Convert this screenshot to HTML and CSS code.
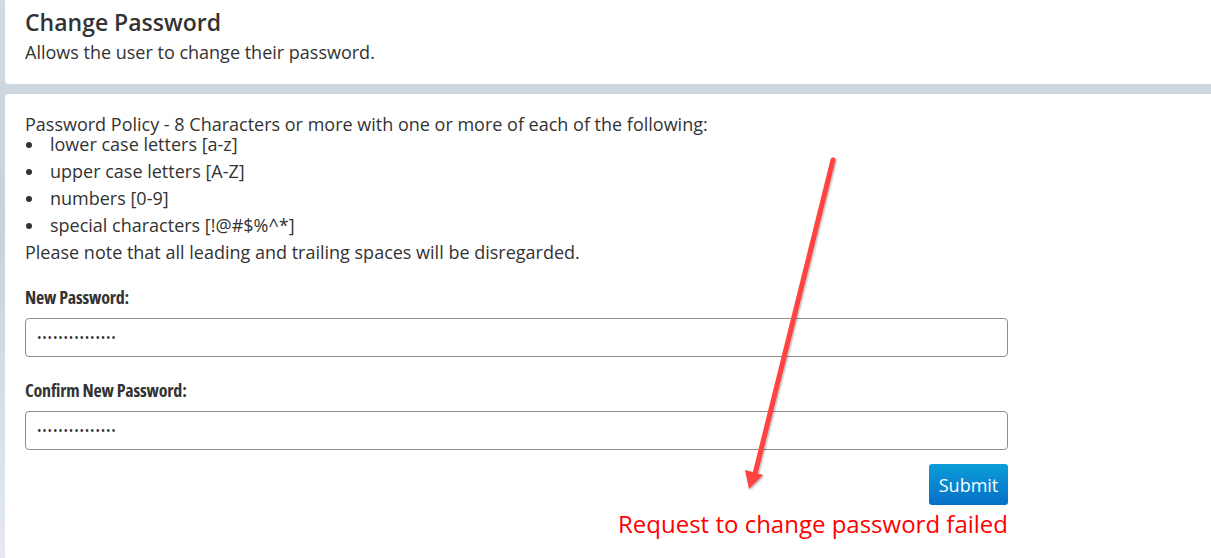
FILE: index.html
```html
<!DOCTYPE html>
<html>
<head>
<meta charset="utf-8">
<link rel="stylesheet" href="styles.css">
</head>
<body>
<div class="page">
  <header class="card head">
    <h1 class="title">Change Password</h1>
    <p class="subtitle">Allows the user to change their password.</p>
  </header>
  <main class="card body">
    <div class="form">
      <p class="policy">Password Policy - 8 Characters or more with one or more of each of the following:</p>
      <ul class="rules">
        <li>lower case letters [a-z]</li>
        <li>upper case letters [A-Z]</li>
        <li>numbers [0-9]</li>
        <li>special characters [!@#$%^*]</li>
      </ul>
      <p class="policy">Please note that all leading and trailing spaces will be disregarded.</p>
      <label class="label first" for="np">New Password:</label>
      <input class="field" id="np" type="password" value="abcdefghijklmno">
      <label class="label" for="cp">Confirm New Password:</label>
      <input class="field" id="cp" type="password" value="abcdefghijklmno">
      <div class="actions">
        <button class="submit" type="button">Submit</button>
        <div class="error">Request to change password failed</div>
      </div>
    </div>
  </main>
</div>
<svg class="arrow" width="1211" height="558" viewBox="0 0 1211 558">
  <defs>
    <filter id="sh" x="-20%" y="-20%" width="140%" height="140%">
      <feDropShadow dx="1" dy="1" stdDeviation="1.2" flood-color="#000" flood-opacity="0.35"/>
    </filter>
  </defs>
  <g filter="url(#sh)">
    <line x1="833" y1="160" x2="755" y2="474" stroke="#ff4242" stroke-width="5" stroke-linecap="round"/>
    <polygon points="745,470 763,475 749,489" fill="#ff4242"/>
  </g>
</svg>
</body>
</html>
```

FILE: styles.css
```css
html, body {
  margin: 0;
  padding: 0;
}
body {
  width: 1211px;
  height: 558px;
  overflow: hidden;
  background: linear-gradient(180deg, #d3dbe2 0%, #c9d1d9 40%, #d6dde3 70%, #e6eaee 100%);
  font-family: "Open Sans", "Noto Sans", sans-serif;
  color: #333;
  position: relative;
}
.page {
  padding-left: 5px;
  display: flex;
  flex-direction: column;
  gap: 10px;
}
.card {
  background: #fff;
  border-radius: 4px 0 0 4px;
}
.head {
  height: 84px;
  box-sizing: border-box;
  padding: 5px 20px 0;
  border-radius: 0 0 0 4px;
}
.title {
  margin: 0;
  font-size: 23px;
  line-height: 34px;
  font-weight: 600;
  color: #333;
}
.subtitle {
  margin: 2px 0 0;
  font-size: 18px;
  line-height: 22px;
}
.body {
  padding: 20px 20px 20px;
}
.form {
  width: 983px;
  display: flex;
  flex-direction: column;
}
.policy {
  margin: 0;
  font-size: 18px;
  line-height: 20px;
}
.rules {
  list-style: none;
  margin: 0;
  padding: 0;
}
.rules li {
  display: flex;
  align-items: center;
  font-size: 18px;
  line-height: 20px;
  margin-bottom: 7px;
}
.rules li::before {
  content: "";
  flex-shrink: 0;
  width: 6px;
  height: 6px;
  border-radius: 50%;
  background: #333;
  margin: 1px 18px 0 1px;
}
.label {
  margin: 23px 0 11px;
  font-weight: 700;
  font-size: 18px;
  line-height: 20px;
  font-stretch: 84%;
  letter-spacing: -0.2px;
  color: #333;
}
.label.first {
  margin-top: 25px;
}
.field {
  height: 39px;
  box-sizing: border-box;
  border: 1px solid #8e8e8e;
  border-radius: 4px;
  padding: 0 11px;
  font-family: "Open Sans", sans-serif;
  font-size: 12px;
  letter-spacing: 0.8px;
  color: #333;
  width: 100%;
  margin: 0;
  outline: none;
}
.actions {
  display: flex;
  flex-direction: column;
  align-items: flex-end;
  margin-top: 14px;
}
.submit {
  height: 41px;
  width: 79px;
  border: none;
  border-radius: 3px;
  background: linear-gradient(180deg, #0b9dd8 0%, #066fc8 100%);
  color: #fff;
  font-family: "Open Sans", sans-serif;
  font-size: 18px;
  padding: 0;
}
.error {
  margin-top: 4px;
  font-size: 24px;
  line-height: 30px;
  color: #ff0000;
}
.arrow {
  position: absolute;
  left: 0;
  top: 0;
  pointer-events: none;
}
```
